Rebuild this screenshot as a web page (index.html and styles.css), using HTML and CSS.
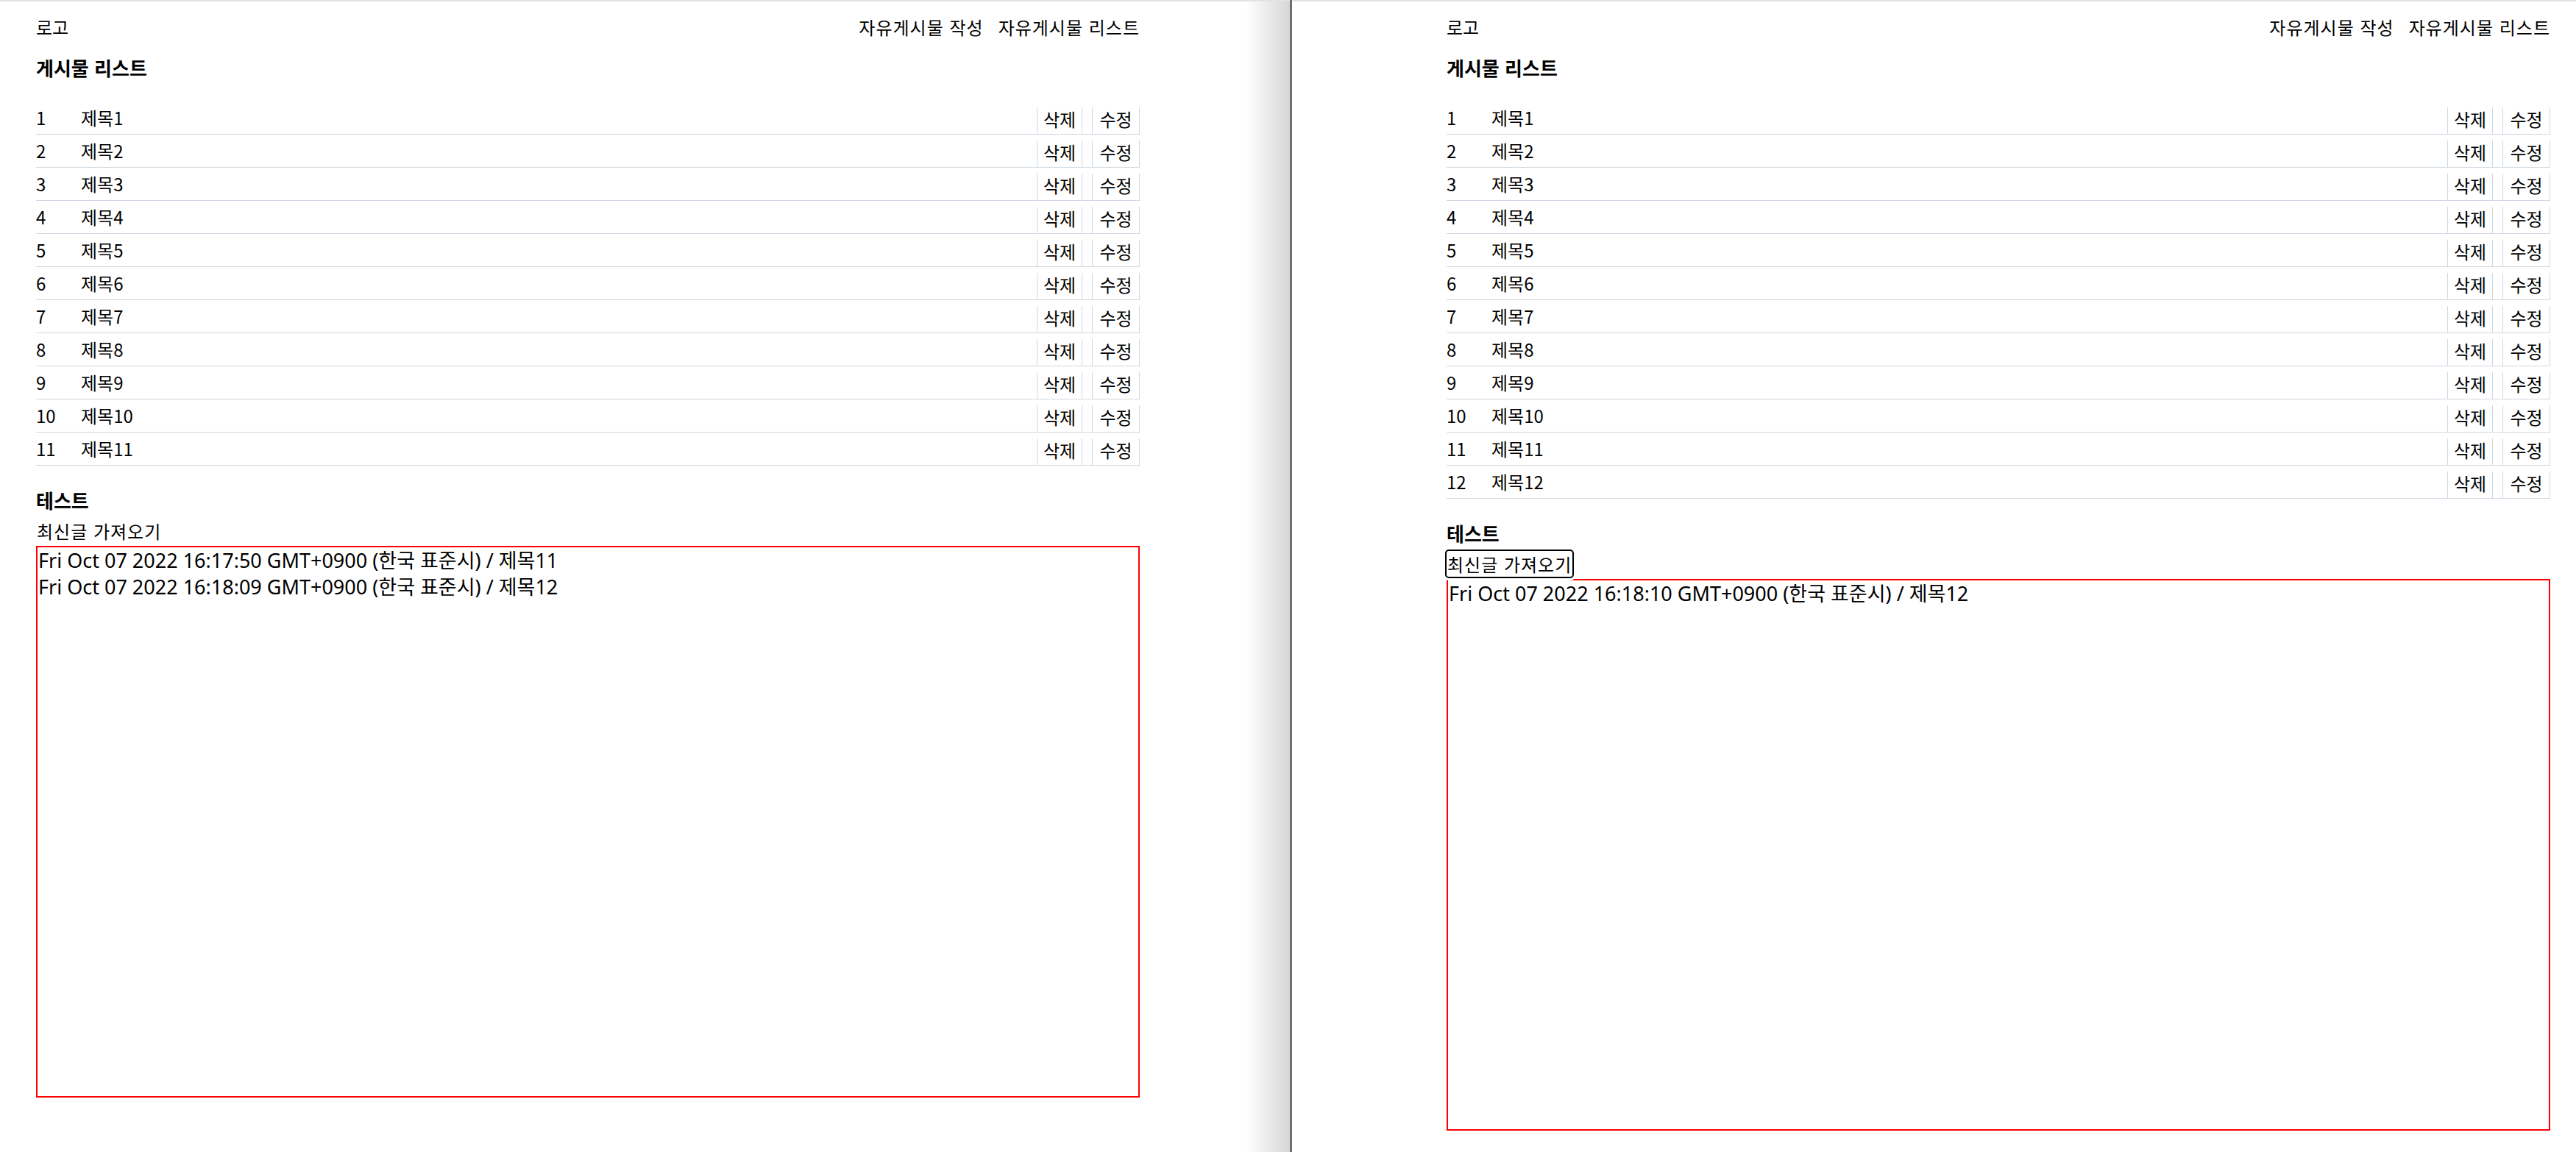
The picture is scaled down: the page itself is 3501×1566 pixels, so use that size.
FILE: index.html
```html
<!DOCTYPE html>
<html lang="ko">
<head>
<meta charset="utf-8">
<title>게시물 리스트</title>
<link rel="stylesheet" href="styles.css">
</head>
<body>
<div class="screen">
  <section class="pane pane-left">
    <div class="page">
      <header class="header">
        <span class="logo">로고</span>
        <nav class="nav"><a href="#">자유게시물 작성</a><a href="#">자유게시물 리스트</a></nav>
      </header>
      <h2 class="title">게시물 리스트</h2>
      <div class="list">
        <div class="row"><span class="num">1</span><span class="subject">제목1</span><button class="btn">삭제</button><button class="btn btn-edit">수정</button></div>
        <div class="row"><span class="num">2</span><span class="subject">제목2</span><button class="btn">삭제</button><button class="btn btn-edit">수정</button></div>
        <div class="row"><span class="num">3</span><span class="subject">제목3</span><button class="btn">삭제</button><button class="btn btn-edit">수정</button></div>
        <div class="row"><span class="num">4</span><span class="subject">제목4</span><button class="btn">삭제</button><button class="btn btn-edit">수정</button></div>
        <div class="row"><span class="num">5</span><span class="subject">제목5</span><button class="btn">삭제</button><button class="btn btn-edit">수정</button></div>
        <div class="row"><span class="num">6</span><span class="subject">제목6</span><button class="btn">삭제</button><button class="btn btn-edit">수정</button></div>
        <div class="row"><span class="num">7</span><span class="subject">제목7</span><button class="btn">삭제</button><button class="btn btn-edit">수정</button></div>
        <div class="row"><span class="num">8</span><span class="subject">제목8</span><button class="btn">삭제</button><button class="btn btn-edit">수정</button></div>
        <div class="row"><span class="num">9</span><span class="subject">제목9</span><button class="btn">삭제</button><button class="btn btn-edit">수정</button></div>
        <div class="row"><span class="num">10</span><span class="subject">제목10</span><button class="btn">삭제</button><button class="btn btn-edit">수정</button></div>
        <div class="row"><span class="num">11</span><span class="subject">제목11</span><button class="btn">삭제</button><button class="btn btn-edit">수정</button></div>
      </div>
      <h2 class="title title-test">테스트</h2>
      <button class="fetch">최신글 가져오기</button>
      <div class="log">
        <div class="log-line">Fri Oct 07 2022 16:17:50 GMT+0900 (한국 표준시) / 제목11</div>
        <div class="log-line">Fri Oct 07 2022 16:18:09 GMT+0900 (한국 표준시) / 제목12</div>
      </div>
    </div>
  </section>
  <div class="divider"></div>
  <section class="pane pane-right">
    <div class="page">
      <header class="header">
        <span class="logo">로고</span>
        <nav class="nav"><a href="#">자유게시물 작성</a><a href="#">자유게시물 리스트</a></nav>
      </header>
      <h2 class="title">게시물 리스트</h2>
      <div class="list">
        <div class="row"><span class="num">1</span><span class="subject">제목1</span><button class="btn">삭제</button><button class="btn btn-edit">수정</button></div>
        <div class="row"><span class="num">2</span><span class="subject">제목2</span><button class="btn">삭제</button><button class="btn btn-edit">수정</button></div>
        <div class="row"><span class="num">3</span><span class="subject">제목3</span><button class="btn">삭제</button><button class="btn btn-edit">수정</button></div>
        <div class="row"><span class="num">4</span><span class="subject">제목4</span><button class="btn">삭제</button><button class="btn btn-edit">수정</button></div>
        <div class="row"><span class="num">5</span><span class="subject">제목5</span><button class="btn">삭제</button><button class="btn btn-edit">수정</button></div>
        <div class="row"><span class="num">6</span><span class="subject">제목6</span><button class="btn">삭제</button><button class="btn btn-edit">수정</button></div>
        <div class="row"><span class="num">7</span><span class="subject">제목7</span><button class="btn">삭제</button><button class="btn btn-edit">수정</button></div>
        <div class="row"><span class="num">8</span><span class="subject">제목8</span><button class="btn">삭제</button><button class="btn btn-edit">수정</button></div>
        <div class="row"><span class="num">9</span><span class="subject">제목9</span><button class="btn">삭제</button><button class="btn btn-edit">수정</button></div>
        <div class="row"><span class="num">10</span><span class="subject">제목10</span><button class="btn">삭제</button><button class="btn btn-edit">수정</button></div>
        <div class="row"><span class="num">11</span><span class="subject">제목11</span><button class="btn">삭제</button><button class="btn btn-edit">수정</button></div>
        <div class="row"><span class="num">12</span><span class="subject">제목12</span><button class="btn">삭제</button><button class="btn btn-edit">수정</button></div>
      </div>
      <h2 class="title title-test">테스트</h2>
      <button class="fetch fetch-focus">최신글 가져오기</button>
      <div class="log">
        <div class="log-line">Fri Oct 07 2022 16:18:10 GMT+0900 (한국 표준시) / 제목12</div>
      </div>
    </div>
  </section>
</div>
</body>
</html>
```
FILE: styles.css
```css
html, body {
  margin: 0;
  padding: 0;
  background: #fff;
}

body {
  font-family: "Noto Sans CJK KR", "Noto Sans", sans-serif;
  font-size: 24px;
  line-height: 35px;
  font-weight: 400;
  color: #000;
}

.screen {
  display: flex;
  height: 1566px;
  overflow: hidden;
}

.pane {
  box-sizing: border-box;
  border-top: 2px solid #e2e2e2;
  padding-top: 17px;
}

.pane-left {
  width: 1753px;
  padding-left: 49px;
  background: linear-gradient(to right, #fff calc(100% - 60px), #d6d6d6);
}

.divider {
  width: 3px;
  background: #6f6f6f;
}

.pane-right {
  flex: 1;
  padding-left: 210px;
}

.page {
  width: 1500px;
}

.header {
  display: flex;
  justify-content: space-between;
}

.nav {
  display: flex;
  gap: 20px;
  letter-spacing: 1px;
}

.nav a {
  color: #000;
  text-decoration: none;
}

.title {
  margin: 19px 0 27px;
  font-size: 26px;
  line-height: 38px;
  font-weight: 700;
}

.title-test {
  margin: 28px 0 5px;
}

.row {
  display: flex;
  align-items: center;
  height: 45px;
  box-sizing: border-box;
  padding-bottom: 1px;
  border-bottom: 1px solid #cfd8e3;
}

.num {
  width: 61px;
  flex: none;
}

.subject {
  flex: 1;
}

.btn {
  align-self: flex-end;
  flex: none;
  box-sizing: border-box;
  width: 62px;
  height: 36px;
  margin-bottom: -1px;
  padding: 0 0 4px;
  border: none;
  border-left: 1px solid #cfd8e3;
  border-right: 1px solid #cfd8e3;
  background: none;
  font: inherit;
  line-height: 32px;
  color: #000;
  text-align: center;
}

.btn-edit {
  margin-left: 13px;
  width: 65px;
}

.fetch {
  display: block;
  padding: 0 1px;
  margin: 0 0 3px;
  border: none;
  background: none;
  font: inherit;
  letter-spacing: 1px;
  line-height: 35px;
  color: #000;
}

.fetch-focus {
  position: relative;
  outline: 2px solid #000;
  border-radius: 3px;
  box-shadow: 0 0 0 5px #fff;
}

.log {
  box-sizing: border-box;
  height: 750px;
  border: 2px solid #f00;
  padding: 0 1px;
  font-family: "Noto Sans", "Noto Sans CJK KR", sans-serif;
  font-size: 27px;
}

.log-line {
  line-height: 36px;
}
```
